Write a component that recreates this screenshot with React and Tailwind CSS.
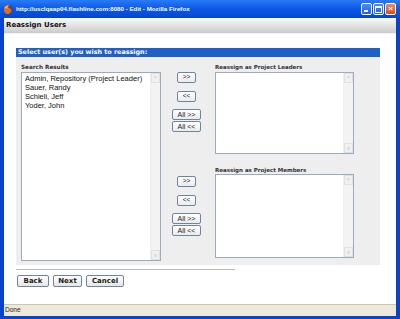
import React from "react";

const users = [
  "Admin, Repository (Project Leader)",
  "Sauer, Randy",
  "Schieli, Jeff",
  "Yoder, John",
];

const Scrollbar = () => (
  <div className="absolute right-0 top-0 bottom-0 w-[10px] flex flex-col justify-between bg-[#f3f3f3] border-l border-[#eeeeee]">
    <div className="h-[10px] flex items-center justify-center bg-[#f0f0f0] border border-[#dde2ea] text-[6px] leading-none text-[#b8b8b8]">
      ^
    </div>
    <div className="h-[10px] flex items-center justify-center bg-[#f0f0f0] border border-[#dde2ea] text-[5px] leading-none text-[#b8b8b8]">
      v
    </div>
  </div>
);

const SmallButton = ({ children, className }) => (
  <button
    className={
      "h-[11px] flex items-center justify-center rounded-[2px] border border-[#6f84a3] bg-gradient-to-b from-white to-[#ebebeb] text-[6.5px] leading-none text-[#222] font-['Liberation_Sans',Arial,sans-serif] " +
      className
    }
  >
    {children}
  </button>
);

const MoveButtons = ({ className }) => (
  <div className={"flex flex-col items-center " + className}>
    <SmallButton className="w-[19px]">&gt;&gt;</SmallButton>
    <SmallButton className="w-[19px] mt-[8px]">&lt;&lt;</SmallButton>
    <SmallButton className="w-[29px] mt-[7px] text-[7px]">All &gt;&gt;</SmallButton>
    <SmallButton className="w-[29px] mt-[1px] text-[7px]">All &lt;&lt;</SmallButton>
  </div>
);

const NavButton = ({ children, className }) => (
  <button
    className={
      "h-[12px] flex items-center justify-center rounded-[2px] border border-[#6f84a3] bg-gradient-to-b from-white to-[#e6e6e6] text-[7px] font-bold leading-none text-[#222] font-['DejaVu_Sans',Verdana,sans-serif] " +
      className
    }
  >
    {children}
  </button>
);

const App = () => {
  return (
    <div className="w-[400px] h-[319px] flex flex-col bg-[#0842d0] font-['Liberation_Sans',Arial,sans-serif] overflow-hidden">
      {/* title bar */}
      <div className="h-[18px] flex items-center bg-gradient-to-b from-[#2a7af5] via-[#0a58e6] to-[#0446cf] pl-[3px] pr-[4px]">
        <svg width="11" height="11" viewBox="0 0 12 12" className="shrink-0">
          <circle cx="6" cy="6" r="5.5" fill="#2a4fa8" />
          <path d="M1 5 C1 1.5 5 0 8 1.2 C6 1.5 5 3 6 4 C8 4.5 9.5 6 9 8 C8 11 4 12 2 9.5 C0.8 8 0.8 6.5 1 5 Z" fill="#e66a1a" />
          <path d="M2 4 C3 2 5 1.5 6.5 2 C5 2.6 4.6 4 5 5 C3.5 5 2.6 4.8 2 4 Z" fill="#f7b53a" />
        </svg>
        <span className="ml-[2px] text-[6.2px] font-bold text-white leading-none whitespace-nowrap">
          http://usclqaap04.flashline.com:8080 - Edit - Mozilla Firefox
        </span>
        <div className="ml-auto flex gap-[1px]">
          <div className="w-[11px] h-[12px] rounded-[2px] border border-white bg-gradient-to-b from-[#4a8cf7] to-[#2261e0] flex items-end justify-start pl-[2px] pb-[2px]">
            <div className="w-[4px] h-[2px] bg-white" />
          </div>
          <div className="w-[11px] h-[12px] rounded-[2px] border border-white bg-gradient-to-b from-[#4a8cf7] to-[#2261e0] flex items-center justify-center">
            <div className="w-[7px] h-[7px] border border-white border-t-2" />
          </div>
          <div className="w-[11px] h-[12px] rounded-[2px] border border-white bg-gradient-to-b from-[#f08a5a] to-[#d64a1c] flex items-center justify-center text-white text-[8px] font-bold leading-none">
            ×
          </div>
        </div>
      </div>

      <div className="flex-1 mx-[4px] flex flex-col bg-white">
        {/* dialog header */}
        <div className="h-[16px] flex items-center pl-[2px] bg-gradient-to-b from-[#fafafa] via-[#e3e3e3] to-[#cccccc] border-b border-[#f4f4f4]">
          <span className="text-[7px] font-bold text-[#111] font-['DejaVu_Sans',Verdana,sans-serif] leading-none">
            Reassign Users
          </span>
        </div>

        <div className="flex-1 flex flex-col pl-[12px] pt-[14px]">
          <div className="w-[364px] h-[9px] flex items-center pl-[2px] bg-[#1f60c6]">
            <span className="text-[6.4px] font-bold text-white leading-none font-['DejaVu_Sans',Verdana,sans-serif]">
              Select user(s) you wish to reassign:
            </span>
          </div>

          <div className="w-[364px] h-[208px] bg-[#eeeeee] flex pl-[5px] pt-[6px]">
            {/* search results */}
            <div className="w-[140px] flex flex-col">
              <div className="h-[9px] text-[5.7px] font-bold text-[#333] leading-none pt-[2px] font-['DejaVu_Sans',Verdana,sans-serif]">
                Search Results
              </div>
              <div className="relative h-[189px] bg-white border border-[#9eabbd] pl-[3px] pt-[1px]">
                {users.map((u) => (
                  <div key={u} className="text-[7.5px] leading-[9px] text-[#111] whitespace-nowrap">
                    {u}
                  </div>
                ))}
                <Scrollbar />
              </div>
            </div>

            {/* move buttons */}
            <div className="w-[54px] flex flex-col pr-[3px] pt-[9px]">
              <MoveButtons />
              <MoveButtons className="mt-[44px]" />
            </div>

            {/* targets */}
            <div className="w-[139px] flex flex-col">
              <div className="h-[9px] text-[5.5px] font-bold text-[#333] leading-none pt-[2px] font-['DejaVu_Sans',Verdana,sans-serif] whitespace-nowrap">
                Reassign as Project Leaders
              </div>
              <div className="relative h-[82px] bg-white border border-[#9eabbd]">
                <Scrollbar />
              </div>
              <div className="mt-[11px] h-[9px] text-[5.5px] font-bold text-[#333] leading-none pt-[3px] font-['DejaVu_Sans',Verdana,sans-serif] whitespace-nowrap">
                Reassign as Project Members
              </div>
              <div className="relative h-[84px] bg-white border border-[#9eabbd]">
                <Scrollbar />
              </div>
            </div>
          </div>

          <div className="mt-[4px] w-[219px] h-px bg-[#b8b8b8]" />

          <div className="mt-[5px] ml-[1px] flex gap-[4px]">
            <NavButton className="w-[32px]">Back</NavButton>
            <NavButton className="w-[29px]">Next</NavButton>
            <NavButton className="w-[38px]">Cancel</NavButton>
          </div>
        </div>

        {/* status bar */}
        <div className="h-[12px] flex items-center pl-[1px] bg-[#ece9d8] border-t border-[#c9c6b5]">
          <span className="text-[6.5px] text-[#222] leading-none">Done</span>
        </div>
      </div>
      <div className="h-[3px]" />
    </div>
  );
};

export default App;
